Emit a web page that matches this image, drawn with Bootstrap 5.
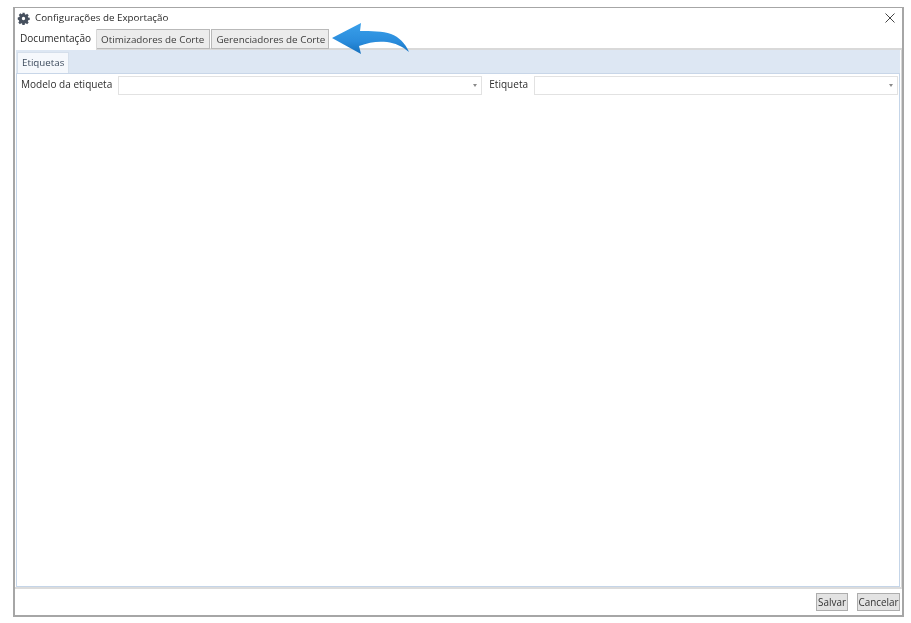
<!DOCTYPE html>
<html lang="pt"><head><meta charset="utf-8"><title>Configurações de Exportação</title>
<link href="https://cdn.jsdelivr.net/npm/bootstrap@5.3.0/dist/css/bootstrap.min.css" rel="stylesheet">
<style>
html,body{height:100%;background:#fff;overflow:hidden}
body{font-family:"Open Sans","Noto Sans",sans-serif;font-size:10.1px;color:#2e2e2e}
.janela{position:relative;height:610px;width:891px;margin:7px 0 0 13px;border:1px solid #a6a6a6;border-width:1px 2px 2px 2px;background:#fff;filter:blur(.35px)}
.titulo{height:21px;padding:0 0 1px 2px;gap:5px;color:#2a2a2a;font-size:9.8px}
.fecha{margin-right:7px}
.abas{height:21px;border:0;border-bottom:2px solid #d9d9d9;flex-wrap:nowrap;padding-left:0}
.abas .nav-link{height:20px;padding:0 5px 0 4px;line-height:19px;border:1px solid #b9b9b9;border-left:0;border-radius:0;background:#ececec;color:#3c3c3c;margin:0;font-size:9.85px}
.abas .nav-link.active{height:21px;background:#fff;border-color:#d9d9d9;border-width:0 1px 0 0;color:#2a2a2a;padding:0 5px 0 5px;font-size:10.05px}
.abas .nav-link.terceira{margin-left:1px;border-left:1px solid #b9b9b9;padding:0 3px 0 4px}
.painel{flex:1;padding:0 1px;min-height:0;border-right:1px solid #d6d6d6}
.faixa{height:24px;background:#dde7f3;padding-left:1px;border-bottom:1px solid #c8d6e8;align-items:flex-end}
.faixa span{height:21px;line-height:20px;background:#f5f8fc;border:1px solid #d5dfeb;border-bottom:0;padding:0 4px;color:#3c4a5c;font-size:9.75px}
.area{flex:1;border:1px solid #c5d5e8;border-top:0;background:#fff;min-height:0}
.campos{height:21px;padding:1px 1px 0 4px;align-items:center}
.rotulo{white-space:nowrap;font-size:10.05px}
.caixa{flex:1;height:19px;border:1px solid #e2e2e2;background:#fff;align-items:center;justify-content:flex-end;padding-right:4px}
.seta{width:0;height:0;border:2.500px solid transparent;border-top:3px solid #8a8a8a;border-bottom:0}
.rot-um{margin-right:6px}
.rot-dois{margin:0 6px 0 7px}
.rodape{height:28px;border-top:2px solid #dcdcdc;justify-content:flex-end;align-items:center;gap:9px;padding-right:2px;background:#fff}
.rodape .btn{height:18px;padding:0;line-height:16px;border:1px solid #adadad;background:#e3e3e3;color:#333;font-size:9.9px;border-radius:0}
.rodape .btn-salvar{width:32px}
.rodape .btn-cancelar{width:43px}
.flecha{position:absolute;left:316px;top:15px}
</style></head>
<body>
<div class="janela d-flex flex-column">
  <div class="titulo d-flex align-items-center">
    <svg width="13" height="13" viewBox="0 0 14 14" aria-hidden="true"><path fill="#46505e" fill-rule="evenodd" d="M5.800.8h2.400l.3 1.700 1 .4 1.400-1 1.700 1.700-1 1.400.4 1 1.700.3v2.400l-1.700.3-.4 1 1 1.400-1.700 1.700-1.400-1-1 .4-.3 1.700H5.800l-.3-1.700-1-.4-1.400 1-1.700-1.700 1-1.400-.4-1L.8 8.200V5.800l1.700-.3.4-1-1-1.400 1.700-1.700 1.400 1 1-.4zM7 5.200a1.800 1.800 0 1 0 0 3.600 1.800 1.800 0 0 0 0-3.600z"/></svg>
    <span>Configurações de Exportação</span>
    <svg class="fecha ms-auto" width="10" height="10" viewBox="0 0 10 10" aria-hidden="true"><path d="M.5.500l9 9M9.500.500l-9 9" stroke="#444" stroke-width="1"/></svg>
  </div>
  <ul class="nav nav-tabs abas">
    <li class="nav-item"><a class="nav-link active" href="#">Documentação</a></li>
    <li class="nav-item"><a class="nav-link" href="#">Otimizadores de Corte</a></li>
    <li class="nav-item"><a class="nav-link terceira" href="#">Gerenciadores de Corte</a></li>
  </ul>
  <div class="painel d-flex flex-column">
    <div class="faixa d-flex"><span>Etiquetas</span></div>
    <div class="area">
      <div class="campos d-flex">
        <span class="rotulo rot-um">Modelo da etiqueta</span>
        <div class="caixa d-flex"><i class="seta"></i></div>
        <span class="rotulo rot-dois">Etiqueta</span>
        <div class="caixa d-flex"><i class="seta"></i></div>
      </div>
    </div>
  </div>
  <div class="rodape d-flex">
    <button class="btn btn-salvar" type="button">Salvar</button>
    <button class="btn btn-cancelar" type="button">Cancelar</button>
  </div>
  <svg class="flecha" width="80" height="34" viewBox="0 0 80 34" aria-hidden="true">
    <defs><linearGradient id="g" x1="0" y1="0" x2="0" y2="1"><stop offset="0" stop-color="#3aa0ea"/><stop offset=".6" stop-color="#2a8cdc"/><stop offset="1" stop-color="#1570bd"/></linearGradient></defs>
    <path fill="url(#g)" d="M1 15 30 0l-1 8C40 8 52 8 60 11c8 3 14 9 18 18-7-6-14-9-22-10-9-1-18 0-28 4l2 8z"/>
  </svg>
</div>
<script src="https://cdn.jsdelivr.net/npm/bootstrap@5.3.0/dist/js/bootstrap.bundle.min.js"></script>
</body></html>
